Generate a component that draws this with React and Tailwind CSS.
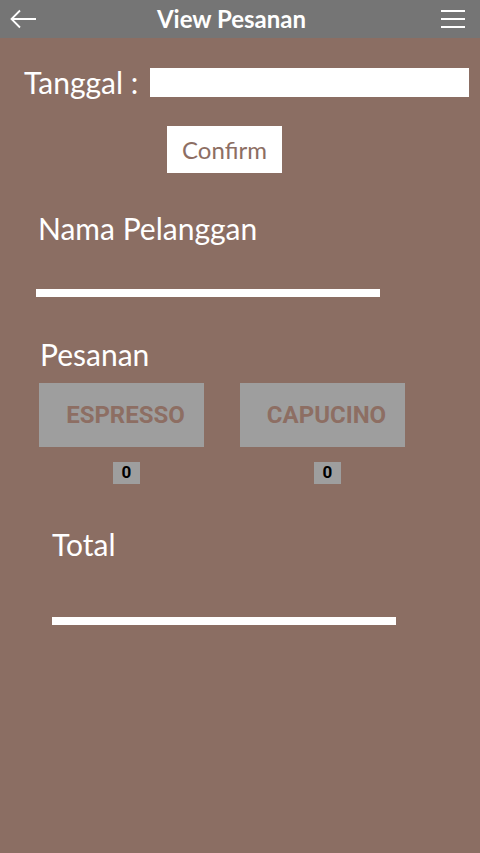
import React from "react";

function Counter({ value }) {
  return (
    <div className="w-[27px] h-[22px] bg-[#9e9e9e] flex items-center justify-center text-[17px] font-bold text-black" style={{ fontFamily: "Roboto, sans-serif" }}>
      {value}
    </div>
  );
}

function MenuItem({ label }) {
  return (
    <div className="flex flex-col items-center w-[165px]">
      <button className="w-[165px] h-[64px] bg-[#9e9e9e] text-[#8d6e63] text-[24px] font-bold pl-[8px]" style={{ fontFamily: "Roboto, sans-serif" }}>
        {label}
      </button>
      <div className="mt-[15px] ml-[10px]">
        <Counter value={0} />
      </div>
    </div>
  );
}

export default function App() {
  return (
    <div className="w-[480px] h-[853px] bg-[#8b6e63] text-white flex flex-col" style={{ fontFamily: "Lato, sans-serif" }}>
      {/* top bar */}
      <div className="h-[38px] bg-[#757575] flex items-center justify-between px-[10px] shrink-0">
        <svg width="27" height="20" viewBox="0 0 27 20" fill="none" stroke="white" strokeWidth="1.8">
          <path d="M26 10H2M10 1.5L1.5 10L10 18.5" />
        </svg>
        <h1 className="text-[24px] font-bold pr-[14px]">View Pesanan</h1>
        <svg width="26" height="20" viewBox="0 0 26 20" fill="none" stroke="white" strokeWidth="2" className="mr-[4px]">
          <path d="M1 2H25M1 10H25M1 18H25" />
        </svg>
      </div>

      {/* tanggal */}
      <div className="flex items-center mt-[29px] pl-[24px]">
        <span className="text-[30px] leading-none">Tanggal :</span>
        <div className="ml-[12px] w-[319px] h-[29px] bg-white" />
      </div>

      <div className="mt-[29px] pl-[167px]">
        <button className="w-[115px] h-[47px] bg-white text-[#8d6e63] text-[24px]">Confirm</button>
      </div>

      {/* nama pelanggan */}
      <div className="mt-[40px] pl-[38px] text-[30px] leading-none">Nama Pelanggan</div>
      <div className="mt-[46px] ml-[36px] w-[344px] h-[8px] bg-white" />

      {/* pesanan */}
      <div className="mt-[42px] pl-[40px] text-[30px] leading-none">Pesanan</div>
      <div className="flex mt-[14px] pl-[39px] gap-[36px]">
        <MenuItem label="ESPRESSO" />
        <MenuItem label="CAPUCINO" />
      </div>

      {/* total */}
      <div className="mt-[45px] pl-[52px] text-[30px] leading-none">Total</div>
      <div className="mt-[58px] ml-[52px] w-[344px] h-[8px] bg-white" />
    </div>
  );
}
